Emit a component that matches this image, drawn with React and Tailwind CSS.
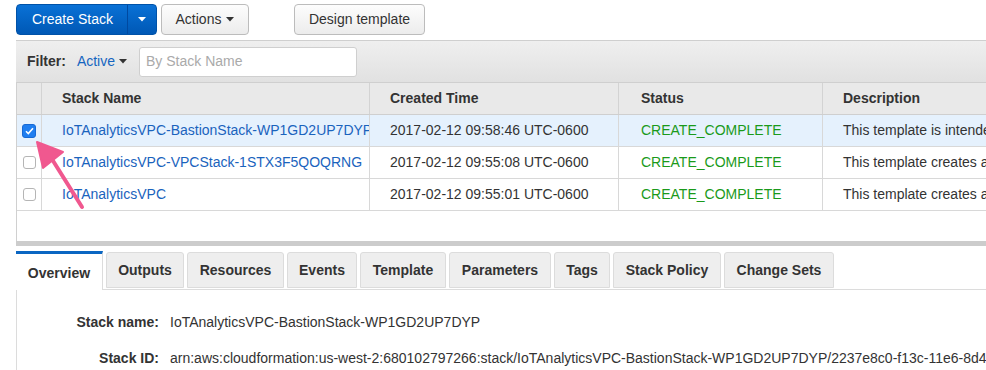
import React from 'react';

const stacks = [
  {
    name: 'IoTAnalyticsVPC-BastionStack-WP1GD2UP7DYP',
    created: '2017-02-12 09:58:46 UTC-0600',
    status: 'CREATE_COMPLETE',
    desc: 'This template is intended to be installed into an existing VPC',
    selected: true,
  },
  {
    name: 'IoTAnalyticsVPC-VPCStack-1STX3F5QOQRNG',
    created: '2017-02-12 09:55:08 UTC-0600',
    status: 'CREATE_COMPLETE',
    desc: 'This template creates a multi-AZ VPC',
  },
  {
    name: 'IoTAnalyticsVPC',
    created: '2017-02-12 09:55:01 UTC-0600',
    status: 'CREATE_COMPLETE',
    desc: 'This template creates a VPC infrastructure',
  },
];

const tabs = [
  { label: 'Outputs', w: 'w-[78px]' },
  { label: 'Resources', w: 'w-[97px]' },
  { label: 'Events', w: 'w-[70px]' },
  { label: 'Template', w: 'w-[86px]' },
  { label: 'Parameters', w: 'w-[102px]' },
  { label: 'Tags', w: 'w-[56px]' },
  { label: 'Stack Policy', w: 'w-[108px]' },
  { label: 'Change Sets', w: 'w-[110px]' },
];

function Caret({ className }) {
  return (
    <svg width="8" height="5" viewBox="0 0 8 5" className={className}>
      <path d="M0 0h8L4 4.5z" fill="currentColor" />
    </svg>
  );
}

function Checkbox({ checked }) {
  if (checked) {
    return (
      <div className="w-[14px] h-[14px] rounded-[3px] bg-[#1f7ef0] border border-[#1769d4] flex items-center justify-center">
        <svg width="9" height="8" viewBox="0 0 9 8">
          <path d="M1 4.2l2.3 2.3L8 1.2" stroke="white" strokeWidth="1.6" fill="none" />
        </svg>
      </div>
    );
  }
  return <div className="w-[13px] h-[13px] rounded-[3px] bg-white border border-[#b5b5b5]" />;
}

export default function App() {
  return (
    <div className="relative w-[986px] h-[370px] overflow-hidden bg-white text-[14px] text-[#333] font-['Liberation_Sans',Arial,sans-serif]">
      {/* toolbar */}
      <div className="flex items-start h-10 pl-4 pt-[4px]">
        <div className="flex h-[31px] rounded-[4px] border border-[#0052a8] bg-gradient-to-b from-[#0a71d6] to-[#0058b5] text-white whitespace-nowrap">
          <div className="flex items-center pl-[15px] w-[110px]">Create Stack</div>
          <div className="flex items-center justify-center w-[29px] border-l border-[#0049a0]">
            <Caret />
          </div>
        </div>
        <button className="ml-[4px] flex items-center gap-[5px] h-[31px] w-[88px] justify-center rounded-[4px] border border-[#bcbcbc] bg-gradient-to-b from-[#fdfdfd] to-[#ececec] text-[#333] whitespace-nowrap">
          Actions <Caret className="text-[#333]" />
        </button>
        <button className="ml-[45px] flex items-center justify-center h-[31px] w-[131px] rounded-[4px] border border-[#bcbcbc] bg-gradient-to-b from-[#fdfdfd] to-[#ececec] text-[#333] whitespace-nowrap">
          Design template
        </button>
      </div>

      <div className="ml-4">
        {/* filter bar */}
        <div className="flex items-center h-[42px] border-t border-[#cfcfcf] bg-gradient-to-b from-[#efefef] to-[#e1e1e1] pl-[11px]">
          <span className="font-bold">Filter:</span>
          <span className="ml-[11px] text-[#1565c0] flex items-center gap-[4px]">
            Active <Caret className="text-[#333]" />
          </span>
          <div className="ml-[12px] w-[218px] h-[30px] rounded-[3px] border border-[#cfcfcf] bg-white flex items-center px-[6px] text-[#aaa]">
            By Stack Name
          </div>
        </div>

        {/* table */}
        <div className="border-l border-[#d0d0d0]">
          <div className="grid grid-cols-[25px_328px_249px_204px_1fr] h-[33px] bg-[#e9e9e9] border-y border-[#cfcfcf] font-bold">
            <div className="border-r border-[#d3d3d3]" />
            <div className="flex items-center px-5 border-r border-[#d3d3d3]">Stack Name</div>
            <div className="flex items-center px-5 border-r border-[#d3d3d3]">Created Time</div>
            <div className="flex items-center px-[22px] border-r border-[#d3d3d3]">Status</div>
            <div className="flex items-center px-5 whitespace-nowrap">Description</div>
          </div>
          {stacks.map((s) => (
            <div
              key={s.name}
              className={`grid grid-cols-[25px_328px_249px_204px_1fr] h-[32px] border-b border-[#d8d8d8] ${s.selected ? 'bg-[#e5f1fd]' : 'bg-white'}`}
            >
              <div className="flex items-center justify-center border-r border-[#d8d8d8]">
                <Checkbox checked={s.selected} />
              </div>
              <div className="flex items-center pl-5 border-r border-[#d8d8d8] overflow-hidden whitespace-nowrap text-[#1a63bd]">{s.name}</div>
              <div className="flex items-center px-5 border-r border-[#d8d8d8] whitespace-nowrap">{s.created}</div>
              <div className="flex items-center px-[22px] border-r border-[#d8d8d8] text-[#1a9a1a]">{s.status}</div>
              <div className="flex items-center px-5 whitespace-nowrap overflow-hidden">{s.desc}</div>
            </div>
          ))}
          <div className="h-[30px]" />
        </div>
        <div className="h-[5px] bg-[#cccccc]" />

        {/* tabs */}
        <div className="flex items-end mt-[6px] h-[38px] border-b border-[#dcdcdc] font-bold">
          <div className="h-[39px] -mb-px w-[87px] flex items-center justify-center pt-[3px] bg-white border-t-[3px] border-t-[#0a66c2] border-r border-[#dcdcdc]">
            Overview
          </div>
          {tabs.map((t) => (
            <div
              key={t.label}
              className={`ml-[3px] h-[36px] mb-px flex items-center justify-center ${t.w} bg-[#eeeeee] border border-[#dcdcdc] rounded-t-[3px] whitespace-nowrap`}
            >
              {t.label}
            </div>
          ))}
        </div>

        {/* details */}
        <div className="border-l border-[#dcdcdc] pt-[21px] h-[100px]">
          <div className="flex items-center h-[22px]">
            <div className="w-[142px] shrink-0 text-right font-bold">Stack name:</div>
            <div className="ml-[11px] whitespace-nowrap">IoTAnalyticsVPC-BastionStack-WP1GD2UP7DYP</div>
          </div>
          <div className="flex items-center h-[22px] mt-[14px]">
            <div className="w-[142px] shrink-0 text-right font-bold">Stack ID:</div>
            <div className="ml-[11px] whitespace-nowrap">
              arn:aws:cloudformation:us-west-2:680102797266:stack/IoTAnalyticsVPC-BastionStack-WP1GD2UP7DYP/2237e8c0-f13c-11e6-8d4b-50a68a0e32ba
            </div>
          </div>
        </div>
      </div>

      {/* annotation arrow */}
      <svg className="absolute left-0 top-0 pointer-events-none" width="120" height="220" viewBox="0 0 120 220">
        <line x1="82" y1="207" x2="50" y2="156" stroke="#f0588f" strokeWidth="4" strokeLinecap="round" />
        <path d="M37 142 L63 152 L43 168 Z" fill="#f0588f" stroke="#f0588f" strokeWidth="2" strokeLinejoin="round" />
      </svg>
    </div>
  );
}
